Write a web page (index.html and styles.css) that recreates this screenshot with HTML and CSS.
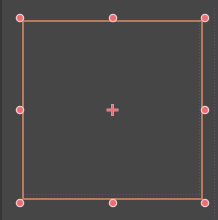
FILE: index.html
```html
<!DOCTYPE html>
<html>
<head>
<meta charset="utf-8">
<link rel="stylesheet" href="styles.css">
</head>
<body>
<div class="canvas">
  <div class="edge"></div>
  <svg class="stage" width="218" height="220" viewBox="0 0 218 220">
    <line class="guide" x1="24" y1="194.5" x2="200" y2="194.5"/>
    <line class="guide" x1="199.5" y1="22" x2="199.5" y2="195"/>
    <line class="guide" x1="214.5" y1="8" x2="214.5" y2="220"/>
    <rect class="sel" x="23" y="21" width="179" height="178"/>
    <g class="handles">
      <circle cx="20" cy="18" r="3.6"/>
      <circle cx="113" cy="18" r="3.6"/>
      <circle cx="205" cy="18" r="3.6"/>
      <circle cx="20" cy="110" r="3.6"/>
      <circle cx="205" cy="110" r="3.6"/>
      <circle cx="20" cy="203" r="3.6"/>
      <circle cx="113" cy="203" r="3.6"/>
      <circle cx="205" cy="203" r="3.6"/>
    </g>
    <path class="cross-o" d="M111 104h3v4.5h4.5v3h-4.5v4.5h-3v-4.5h-4.5v-3h4.5z"/>
    <path class="cross" d="M112 105h1v4.5h4.5v1h-4.5v4.5h-1v-4.5h-4.5v-1h4.5z"/>
  </svg>
</div>
</body>
</html>
```
FILE: styles.css
```css
html, body {
  margin: 0;
  padding: 0;
  background: #464646;
}
.canvas {
  position: relative;
  width: 218px;
  height: 220px;
  overflow: hidden;
  background: #464646;
}
.edge {
  position: absolute;
  left: 0;
  top: 0;
  width: 2px;
  height: 220px;
  background: #363636;
}
.stage {
  position: absolute;
  left: 0;
  top: 0;
  display: block;
}
.guide {
  stroke: #7a4a7a;
  stroke-width: 1;
  stroke-dasharray: 1 2;
  opacity: 0.8;
}
.sel {
  fill: none;
  stroke: #b87a5c;
  stroke-width: 2;
}
.handles circle {
  fill: #f06a72;
  stroke: #e8cccc;
  stroke-width: 1.4;
}
.cross-o {
  fill: #d89098;
}
.cross {
  fill: #f06a78;
}
```
